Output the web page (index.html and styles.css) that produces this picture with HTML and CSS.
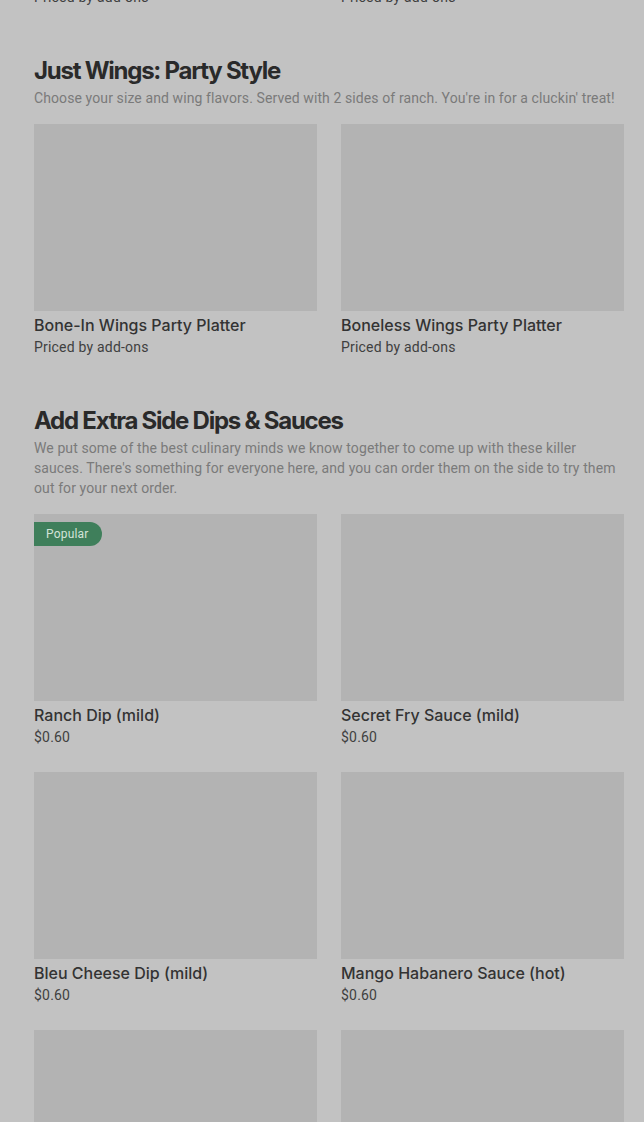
FILE: index.html
```html
<!DOCTYPE html>
<html lang="en">
<head>
<meta charset="utf-8">
<title>Menu</title>
<link rel="stylesheet" href="styles.css">
</head>
<body>
<main class="menu">
  <div class="tail-row">
    <p class="price">Priced by add-ons</p>
    <p class="price">Priced by add-ons</p>
  </div>

  <section class="section">
    <h2 class="section-title">Just Wings: Party Style</h2>
    <p class="section-desc">Choose your size and wing flavors. Served with 2 sides of ranch. You're in for a cluckin' treat!</p>
    <div class="grid">
      <div class="item">
        <div class="thumb"></div>
        <h3 class="item-title">Bone-In Wings Party Platter</h3>
        <p class="price">Priced by add-ons</p>
      </div>
      <div class="item">
        <div class="thumb"></div>
        <h3 class="item-title">Boneless Wings Party Platter</h3>
        <p class="price">Priced by add-ons</p>
      </div>
    </div>
  </section>

  <section class="section">
    <h2 class="section-title">Add Extra Side Dips &amp; Sauces</h2>
    <p class="section-desc">We put some of the best culinary minds we know together to come up with these killer sauces. There's something for everyone here, and you can order them on the side to try them out for your next order.</p>
    <div class="grid">
      <div class="item">
        <div class="thumb"><span class="badge">Popular</span></div>
        <h3 class="item-title">Ranch Dip (mild)</h3>
        <p class="price">$0.60</p>
      </div>
      <div class="item">
        <div class="thumb"></div>
        <h3 class="item-title">Secret Fry Sauce (mild)</h3>
        <p class="price">$0.60</p>
      </div>
      <div class="item">
        <div class="thumb"></div>
        <h3 class="item-title">Bleu Cheese Dip (mild)</h3>
        <p class="price">$0.60</p>
      </div>
      <div class="item">
        <div class="thumb"></div>
        <h3 class="item-title">Mango Habanero Sauce (hot)</h3>
        <p class="price">$0.60</p>
      </div>
      <div class="item">
        <div class="thumb"></div>
      </div>
      <div class="item">
        <div class="thumb"></div>
      </div>
    </div>
  </section>
</main>
</body>
</html>
```

FILE: styles.css
```css
* { box-sizing: border-box; }
html, body {
  margin: 0;
  padding: 0;
  background: #c2c2c2;
  height: 1122px;
  overflow: hidden;
}
body {
  font-family: Inter, "Liberation Sans", sans-serif;
  color: #2b2b2b;
}
.menu {
  padding: 0 20px 0 34px;
  margin-top: -13px;
}
.tail-row {
  display: grid;
  grid-template-columns: 283px 283px;
  column-gap: 24px;
}
.section {
  margin-top: 48px;
}
.section-title {
  margin: 0;
  font-size: 24px;
  line-height: 32px;
  font-weight: 700;
  letter-spacing: -1.25px;
  color: #2a2a2a;
}
.section-desc {
  margin: 1px 0 0;
  font-family: Roboto, "Liberation Sans", sans-serif;
  font-size: 14px;
  line-height: 20px;
  letter-spacing: 0.1px;
  color: #7a7a7a;
}
.grid {
  margin-top: 16px;
  display: grid;
  grid-template-columns: 283px 283px;
  column-gap: 24px;
  row-gap: 25px;
}
.item {
  display: flex;
  flex-direction: column;
}
.thumb {
  position: relative;
  height: 187px;
  background: #b3b3b3;
}
.badge {
  position: absolute;
  left: 0;
  top: 8px;
  height: 24px;
  padding: 0 13px 0 12px;
  display: flex;
  align-items: center;
  font-family: Roboto, "Liberation Sans", sans-serif;
  font-size: 12px;
  letter-spacing: 0.2px;
  color: #d3e3d8;
  background: #3f7f5b;
  border-radius: 0 12px 12px 0;
}
.item-title {
  margin: 3px 0 0;
  font-size: 16px;
  line-height: 22px;
  font-weight: 500;
  color: #333;
}
.price {
  margin: 1px 0 0;
  font-family: Roboto, "Liberation Sans", sans-serif;
  font-size: 14px;
  line-height: 20px;
  letter-spacing: 0.2px;
  color: #3f3f3f;
}
.tail-row .price { margin: 0; }
```
